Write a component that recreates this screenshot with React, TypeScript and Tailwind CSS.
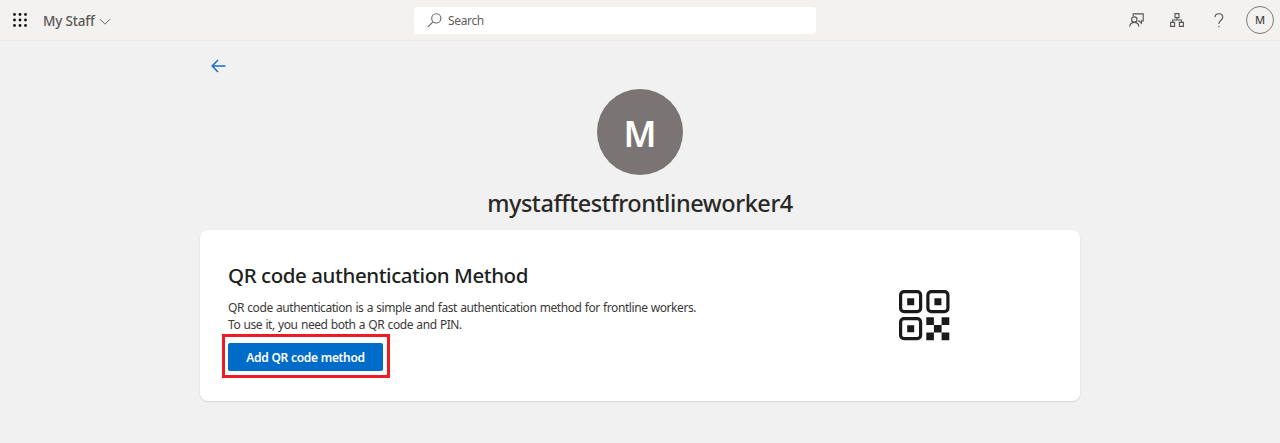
function Header() {
  return (
    <header className="flex h-[41px] items-center rounded-t-[6px] border-b border-[#ebeae9] bg-[#f3f2f1]">
      <div className="flex w-[414px] items-center">
        <svg className="ml-[13px]" width="14" height="14" viewBox="0 0 14 14" fill="#111">
          {[1.5, 7, 12.5].map((y) => [1.5, 7, 12.5].map((x) => <circle key={`${x}-${y}`} cx={x} cy={y} r="1.4" />))}
        </svg>
        <span className="mt-px ml-[16px] text-[13.5px] leading-5 font-medium tracking-[-0.17px] text-[#5a5754]">My Staff</span>
        <svg className="mt-[3px] ml-[4px]" width="12" height="8" viewBox="0 0 12 8" fill="none" stroke="#666" strokeWidth="1">
          <path d="M1 1.2 6 6.2 11 1.2" />
        </svg>
      </div>
      <div className="flex h-[27px] w-[402px] items-center rounded-[4px] bg-white pl-[13px]">
        <svg width="15" height="15" viewBox="0 0 15 15" fill="none" stroke="#666" strokeWidth="1.1">
          <circle cx="9.3" cy="5.4" r="4.6" />
          <path d="M6 8.8.7 14.1" />
        </svg>
        <span className="mt-px ml-[6px] text-[12px] leading-4 tracking-[-0.35px] text-[#605e5c]">Search</span>
      </div>
      <div className="ml-auto flex items-center pr-[6px] text-[#555]">
        <svg width="15" height="15" viewBox="0 0 15 15" fill="none" stroke="currentColor" strokeWidth="1.1">
          <path d="M4.2 3V.9h10v7h-1.8v2.2L10.2 8H9" />
          <circle cx="5.3" cy="6.6" r="2.7" />
          <path d="M.7 13.8c.2-2.8 2.1-4.4 4.6-4.4s4.4 1.6 4.6 4.4" />
        </svg>
        <svg className="ml-[26px]" width="14" height="14" viewBox="0 0 14 14" fill="none" stroke="currentColor" strokeWidth="1.1">
          <path d="M5 .6h4v4H5zM.6 9.4h4v4h-4zM9.4 9.4h4v4h-4zM7 4.6V7M2.6 9.4V7h8.8v2.4" />
        </svg>
        <svg className="ml-[30px]" width="10" height="15" viewBox="0 0 10 15" fill="none" stroke="currentColor" strokeWidth="1.1">
          <path d="M1 4.3C1 2.1 2.7.7 4.9.7s3.9 1.4 3.9 3.5c0 2.8-3.9 3.3-3.9 6.3v.6M4.9 12.9v1.4" />
        </svg>
        <div className="ml-[22px] flex size-[28px] items-center justify-center rounded-full border border-[#777] pt-px text-[11px] font-medium text-[#444]">M</div>
      </div>
    </header>
  );
}

function QrIcon() {
  return (
    <svg width="51" height="51" viewBox="0 0 51 51" fill="#1b1a19">
      <g fill="none" stroke="#1b1a19" strokeWidth="3.2">
        <rect x="1.6" y="1.6" width="20" height="20" rx="3.4" />
        <rect x="28.9" y="1.6" width="20" height="20" rx="3.4" />
        <rect x="1.6" y="28.6" width="20" height="20" rx="3.4" />
      </g>
      <path d="M8.2 8.2h7v7h-7zM35.4 8.2h7v7h-7zM8.2 35.2h7v7h-7zM27.3 27.3h7.6v7.7h-7.6zM42.6 27.3h7.7V35h-7.7zM34.9 35h7.7v7.6h-7.7zM27.3 42.6h7.6v7.6h-7.6zM42.6 42.6h7.7v7.6h-7.7z" />
    </svg>
  );
}

export default function App() {
  return (
    <div className="h-[443px] overflow-hidden bg-[#f1f1f1] font-['Noto_Sans','Open_Sans',sans-serif]">
      <Header />
      <main className="mx-auto w-[880px]">
        <button aria-label="Back" className="mt-[18px] ml-[11px] block">
          <svg width="15" height="14" viewBox="0 0 15 14" fill="none" stroke="#1a6fc4" strokeWidth="1.5">
            <path d="M14.5 7H1.2M7 1 1.2 7 7 13" />
          </svg>
        </button>
        <div className="mx-auto mt-[16px] flex size-[86px] items-center justify-center rounded-full bg-[#7a7574] pt-[3px] text-[35.5px] font-semibold text-white">M</div>
        <h1 className="mt-[12px] text-center text-[23.5px] leading-8 font-medium tracking-[-0.45px] text-[#292827]">mystafftestfrontlineworker4</h1>
        <section className="mt-[10.5px] flex h-[171px] rounded-[8px] bg-white pl-[28px] shadow-[0_1px_2px_rgba(0,0,0,0.12)]">
          <div className="w-[671px] pt-[31.5px]">
            <h2 className="text-[20.5px] leading-[28px] font-medium tracking-[-0.43px] text-[#201f1e]">QR code authentication Method</h2>
            <p className="mt-[10px] text-[12px] leading-[17px] tracking-[-0.43px] text-[#3b3a39] [word-spacing:0.6px]">
              QR code authentication is a simple and fast authentication method for frontline workers.
              <br />
              To use it, you need both a QR code and PIN.
            </p>
            <div className="mt-px -ml-[6px] h-[44px] w-[168px] border-[3px] border-[#ed1c24] pt-[6px] pl-[3px]">
              <button className="block h-[28px] w-[155px] rounded-[2px] bg-[#006cca] pt-px text-[12px] font-semibold tracking-[-0.34px] text-white [word-spacing:0.3px]">Add QR code method</button>
            </div>
          </div>
          <div className="pt-[60.5px]">
            <QrIcon />
          </div>
        </section>
      </main>
    </div>
  );
}
